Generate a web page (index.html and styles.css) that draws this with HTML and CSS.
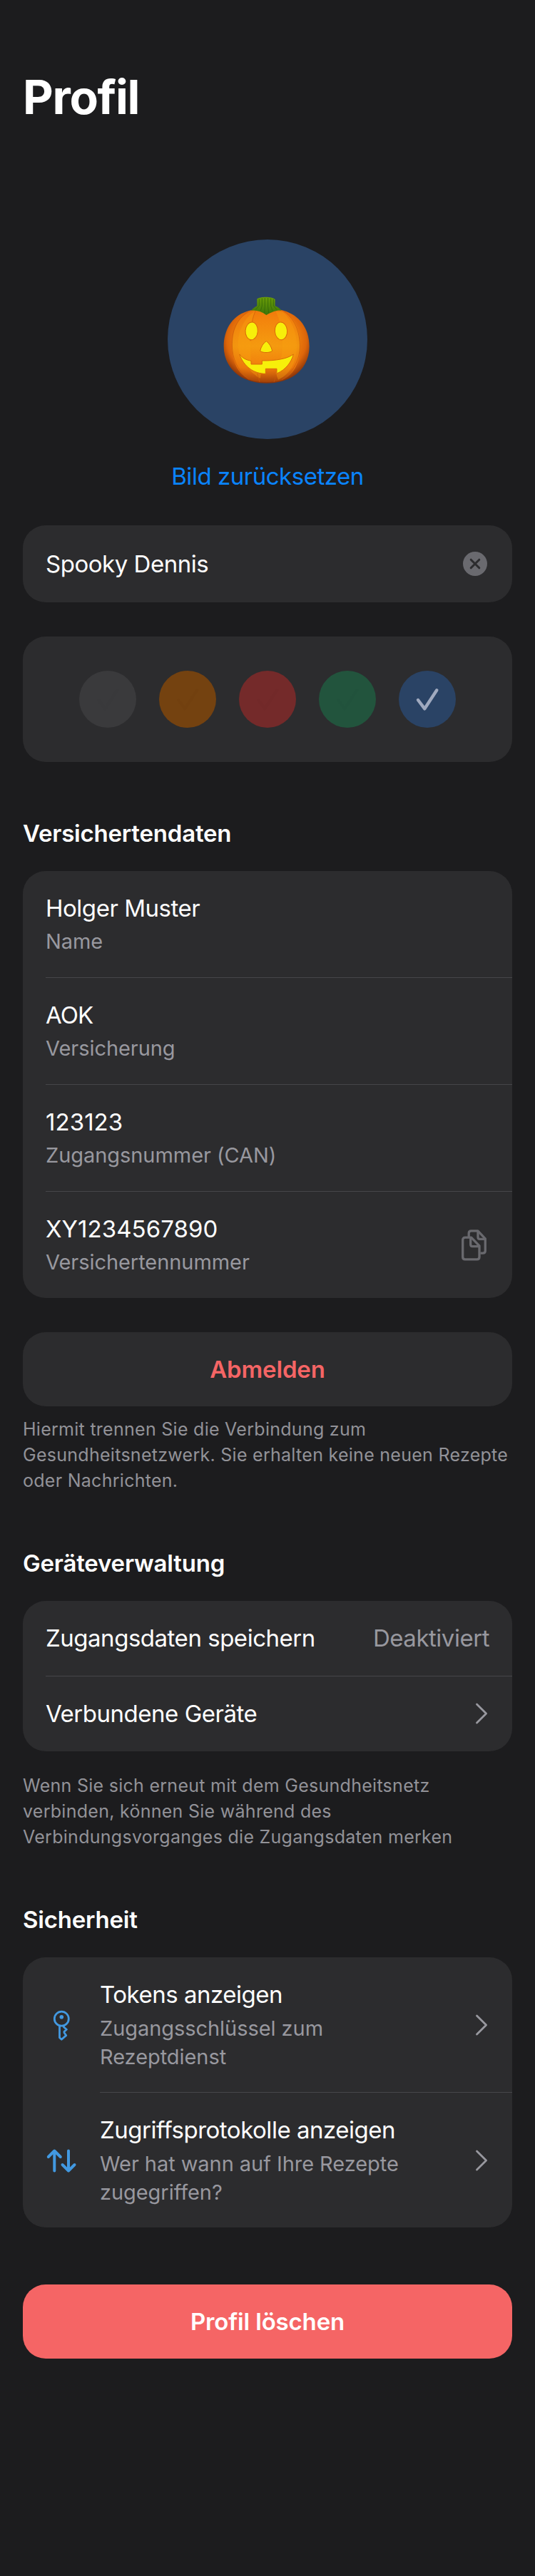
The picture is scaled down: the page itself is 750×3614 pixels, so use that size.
FILE: index.html
```
<!DOCTYPE html>
<html lang="de">
<head>
<meta charset="utf-8">
<title>Profil</title>
<link rel="stylesheet" href="styles.css">
</head>
<body>
<main class="page">
  <h1 class="page-title">Profil</h1>

  <section class="avatar-section">
    <div class="avatar">
      <svg width="170" height="152" viewBox="0 0 510 456" role="img" aria-label="Kürbis">
        <defs>
          <radialGradient id="skin" cx="50%" cy="42%" r="58%">
            <stop offset="0" stop-color="#f79a0e"/>
            <stop offset=".55" stop-color="#f5860c"/>
            <stop offset=".8" stop-color="#dd660a"/>
            <stop offset="1" stop-color="#8a3308"/>
          </radialGradient>
          <linearGradient id="rib" x1="0" y1="0" x2="0" y2="1">
            <stop offset="0" stop-color="#f27a0c"/>
            <stop offset=".5" stop-color="#f49c10"/>
            <stop offset=".8" stop-color="#f07c0c"/>
            <stop offset="1" stop-color="#a84508"/>
          </linearGradient>
          <linearGradient id="stem" x1="0" y1="0" x2="0" y2="1">
            <stop offset="0" stop-color="#6a9c08"/>
            <stop offset="1" stop-color="#3c7408"/>
          </linearGradient>
        </defs>
        <path fill="url(#skin)" d="M250 108C225 98 190 102 165 112C105 132 71 190 71 258C71 350 145 413 250 413C360 413 431 350 431 258C431 180 388 127 325 108C295 98 270 98 250 108Z"/>
        <path fill="url(#rib)" d="M200 106C135 125 106 180 106 255C106 320 130 375 180 398C215 411 285 411 320 398C370 375 392 320 392 255C392 180 365 125 305 106Z" opacity=".8"/>
        <path fill="#f8a010" opacity=".4" d="M205 108C185 150 180 250 186 335L232 335L225 392C215 390 205 378 190 368L140 300C115 220 150 140 205 108ZM318 112C365 150 398 240 365 330C352 360 330 385 300 398L290 372L316 290C322 210 310 150 290 112Z"/>
        <path fill="none" stroke="#c9570a" stroke-width="3" opacity=".65" d="M172 112C118 150 102 205 107 270C112 330 145 375 178 398M325 110C372 145 392 200 391 262C389 325 352 378 315 399M205 108C192 132 184 180 183 235M212 372L222 408M294 374L282 408"/>
        <path fill="url(#stem)" d="M211 58C225 48 273 47 287 60L287 88C298 91 306 98 314 107C295 104 275 112 250 126C228 109 206 104 186 107C194 98 203 91 211 88Z"/>
        <path fill="none" stroke="#2f6408" stroke-width="3" opacity=".7" d="M220 58V87L205 103M232 55V88L226 108M244 54V90L242 118M257 54V90L260 118M269 56V88L276 108M280 59V87L294 103"/>
        <g fill="#f7ef0a" stroke="#d96c08" stroke-width="3" stroke-linejoin="round">
          <ellipse cx="188" cy="193" rx="26" ry="37" transform="rotate(4 188 193)"/>
          <ellipse cx="312" cy="193" rx="26" ry="37" transform="rotate(-4 312 193)"/>
          <path d="M250 236C262 244 271 259 275 277C264 286 234 286 224 277C228 259 237 244 250 236Z"/>
          <path d="M137 291C150 308 165 315 186 319V333H232V318C288 319 340 310 364 291C355 325 332 356 294 372V352H247V373C198 373 156 344 137 291Z"/>
        </g>
      </svg>
    </div>
    <a class="avatar-reset">Bild zurücksetzen</a>
  </section>

  <div class="card name-field">
    <span class="label">Spooky Dennis</span>
    <svg class="clear-icon" width="34" height="34" viewBox="0 0 34 34">
      <circle cx="17" cy="17" r="17"/>
      <path d="M11.2 11.2L22.8 22.8M22.8 11.2L11.2 22.8"/>
    </svg>
  </div>

  <div class="card swatches">
    <span class="swatch gray"><svg viewBox="0 0 80 80"><path d="M27 41L36.3 53.3L53.3 27.3"/></svg></span>
    <span class="swatch orange"><svg viewBox="0 0 80 80"><path d="M27 41L36.3 53.3L53.3 27.3"/></svg></span>
    <span class="swatch red"><svg viewBox="0 0 80 80"><path d="M27 41L36.3 53.3L53.3 27.3"/></svg></span>
    <span class="swatch green"><svg viewBox="0 0 80 80"><path d="M27 41L36.3 53.3L53.3 27.3"/></svg></span>
    <span class="swatch blue selected"><svg viewBox="0 0 80 80"><path d="M27 41L36.3 53.3L53.3 27.3"/></svg></span>
  </div>

  <h2 class="section-title first">Versichertendaten</h2>
  <div class="card list">
    <div class="row"><div class="row-body">
      <div class="texts"><div class="label">Holger Muster</div><div class="sub">Name</div></div>
    </div></div>
    <div class="row"><div class="row-body">
      <div class="texts"><div class="label tight">AOK</div><div class="sub">Versicherung</div></div>
    </div></div>
    <div class="row"><div class="row-body">
      <div class="texts"><div class="label digits">123123</div><div class="sub">Zugangsnummer (CAN)</div></div>
    </div></div>
    <div class="row"><div class="row-body">
      <div class="texts"><div class="label digits">XY1234567890</div><div class="sub">Versichertennummer</div></div>
      <svg class="copy-icon" width="36" height="44" viewBox="0 0 36 44">
        <path d="M5 11.2H13.7L25 22.8V38.4Q25 41.8 21.6 41.8H5Q1.7 41.8 1.7 38.4V14.6Q1.7 11.2 5 11.2Z"/>
        <path d="M12.7 11.4V21Q12.7 23.6 15.3 23.6H24.8"/>
        <path d="M10.2 10V5.2Q10.2 1.8 13.6 1.8H22.9L33.3 12.8V29.8Q33.3 33.2 29.9 33.2H26.5"/>
        <path d="M23 2V10.8Q23 13.4 25.6 13.4H33"/>
      </svg>
    </div></div>
  </div>

  <button class="button logout">Abmelden</button>
  <p class="note near">Hiermit trennen Sie die Verbindung zum<br>Gesundheitsnetzwerk. Sie erhalten keine neuen Rezepte<br>oder Nachrichten.</p>

  <h2 class="section-title">Geräteverwaltung</h2>
  <div class="card list">
    <div class="row"><div class="row-body single">
      <span class="label">Zugangsdaten speichern</span>
      <span class="label value">Deaktiviert</span>
    </div></div>
    <div class="row"><div class="row-body single">
      <span class="label">Verbundene Geräte</span>
      <svg class="chevron" width="20" height="32" viewBox="0 0 20 32"><path d="M2.5 3L15.6 16L2.5 29"/></svg>
    </div></div>
  </div>
  <p class="note">Wenn Sie sich erneut mit dem Gesundheitsnetz<br>verbinden, können Sie während des<br>Verbindungsvorganges die Zugangsdaten merken</p>

  <h2 class="section-title">Sicherheit</h2>
  <div class="card list">
    <div class="row">
      <svg class="row-icon" width="44" height="44" viewBox="0 0 44 44">
        <g stroke-width="2.8"><circle cx="22.3" cy="13.2" r="10"/>
        <path d="M19.5 22.8V39.8L22.3 42.3L28.7 36.6L26 32.8V31.2L29.3 28.2L25.3 24.8V22.8"/></g>
        <circle class="dot" cx="22.3" cy="10.8" r="2.8"/>
      </svg>
      <div class="row-body">
        <div class="texts"><div class="label">Tokens anzeigen</div><div class="sub multi">Zugangsschlüssel zum<br>Rezeptdienst</div></div>
        <svg class="chevron" width="20" height="32" viewBox="0 0 20 32"><path d="M2.5 3L15.6 16L2.5 29"/></svg>
      </div>
    </div>
    <div class="row">
      <svg class="row-icon" width="44" height="44" viewBox="0 0 44 44">
        <g stroke-width="4"><path d="M12.3 36.5V8.7M3.8 17L12.3 8.5L20.8 17"/>
        <path d="M32 8.5V36.3M23.5 28L32 36.5L40.5 28"/></g>
      </svg>
      <div class="row-body">
        <div class="texts"><div class="label">Zugriffsprotokolle anzeigen</div><div class="sub multi">Wer hat wann auf Ihre Rezepte<br>zugegriffen?</div></div>
        <svg class="chevron" width="20" height="32" viewBox="0 0 20 32"><path d="M2.5 3L15.6 16L2.5 29"/></svg>
      </div>
    </div>
  </div>

  <button class="button delete">Profil löschen</button>
</main>
</body>
</html>
```
FILE: styles.css
```
* { box-sizing: border-box; }

body {
  margin: 0;
  background: #1c1c1e;
  color: #fff;
  font-family: Inter, "Liberation Sans", sans-serif;
}

svg { display: block; flex: none; }

.page {
  min-height: 3614px;
  padding: 96px 32px 0;
  display: flex;
  flex-direction: column;
}

.page-title {
  margin: 0;
  font-size: 66px;
  line-height: 80px;
  font-weight: 700;
  letter-spacing: -0.02em;
}

.avatar-section {
  margin-top: 160px;
  display: flex;
  flex-direction: column;
  align-items: center;
}

.avatar {
  width: 280px;
  height: 280px;
  border-radius: 50%;
  background: #2a4365;
  display: flex;
  align-items: center;
  justify-content: center;
}

.avatar-reset {
  margin-top: 30px;
  color: #0a84ff;
  font-size: 33px;
  line-height: 44px;
  letter-spacing: -0.0145em;
}

.card {
  background: #2c2c2e;
  border-radius: 32px;
}

.name-field {
  margin-top: 47px;
  height: 108px;
  padding: 0 35px 0 32px;
  display: flex;
  align-items: center;
  justify-content: space-between;
}

.clear-icon circle { fill: #6a6a6f; }
.clear-icon path {
  fill: none;
  stroke: #2c2c2e;
  stroke-width: 3px;
  stroke-linecap: round;
}

.swatches {
  margin-top: 48px;
  height: 176px;
  display: flex;
  align-items: center;
  justify-content: center;
  gap: 32px;
}

.swatch {
  width: 80px;
  height: 80px;
  border-radius: 50%;
}
.swatch path {
  fill: none;
  stroke: rgba(0, 0, 0, 0.015);
  stroke-width: 4.4px;
  stroke-linecap: round;
  stroke-linejoin: round;
}
.swatch.selected path { stroke: #a0aabf; }
.gray { background: #3a3a3c; }
.orange { background: #744210; }
.red { background: #742a2a; }
.green { background: #22543d; }
.blue { background: #2a4365; }

.section-title {
  margin: 76px 0 31px;
  font-size: 33px;
  line-height: 44px;
  font-weight: 600;
  letter-spacing: -0.006em;
}
.section-title.first { margin-top: 78px; }

.label {
  font-size: 33px;
  line-height: 44px;
  letter-spacing: -0.0145em;
  white-space: nowrap;
}
.label.digits { letter-spacing: 0.002em; }
.label.tight { letter-spacing: -0.03em; }
.label.value { color: #98989f; }

.sub {
  margin-top: 5px;
  color: #98989f;
  font-size: 29px;
  line-height: 40px;
  letter-spacing: -0.002em;
  white-space: nowrap;
}
.sub.multi {
  margin-top: 6px;
  line-height: 39.5px;
}

.row {
  padding-left: 32px;
  display: flex;
  align-items: center;
}

.row-body {
  flex: 1;
  padding: 30px 32px 30px 0;
  display: flex;
  align-items: center;
  justify-content: space-between;
}
.row-body.single { padding-bottom: 31px; }
.row:not(:last-child) .row-body { border-bottom: 1px solid #464649; }

.row-icon {
  margin-right: 32px;
  fill: none;
  stroke: #4299e1;
  stroke-linecap: round;
  stroke-linejoin: round;
}
.row-icon .dot { fill: #4299e1; stroke: none; }

.copy-icon {
  margin-right: 3px;
  fill: none;
  stroke: #69696e;
  stroke-width: 3.3px;
  stroke-linejoin: round;
}

.chevron {
  fill: none;
  stroke: #98989f;
  stroke-width: 2.8px;
  stroke-linecap: round;
  stroke-linejoin: round;
}

.button {
  height: 104px;
  padding: 0;
  border: 0;
  border-radius: 32px;
  font: 600 33px/44px Inter, "Liberation Sans", sans-serif;
  letter-spacing: -0.005em;
}
.logout {
  margin-top: 48px;
  background: #2c2c2e;
  color: #f56565;
}
.delete {
  margin-top: 80px;
  background: #f56565;
  color: #fff;
}

.note {
  margin: 30px 0 0;
  color: #929298;
  font-size: 25px;
  line-height: 36px;
  letter-spacing: 0.011em;
  white-space: nowrap;
}
.note.near { margin-top: 14px; }
```
